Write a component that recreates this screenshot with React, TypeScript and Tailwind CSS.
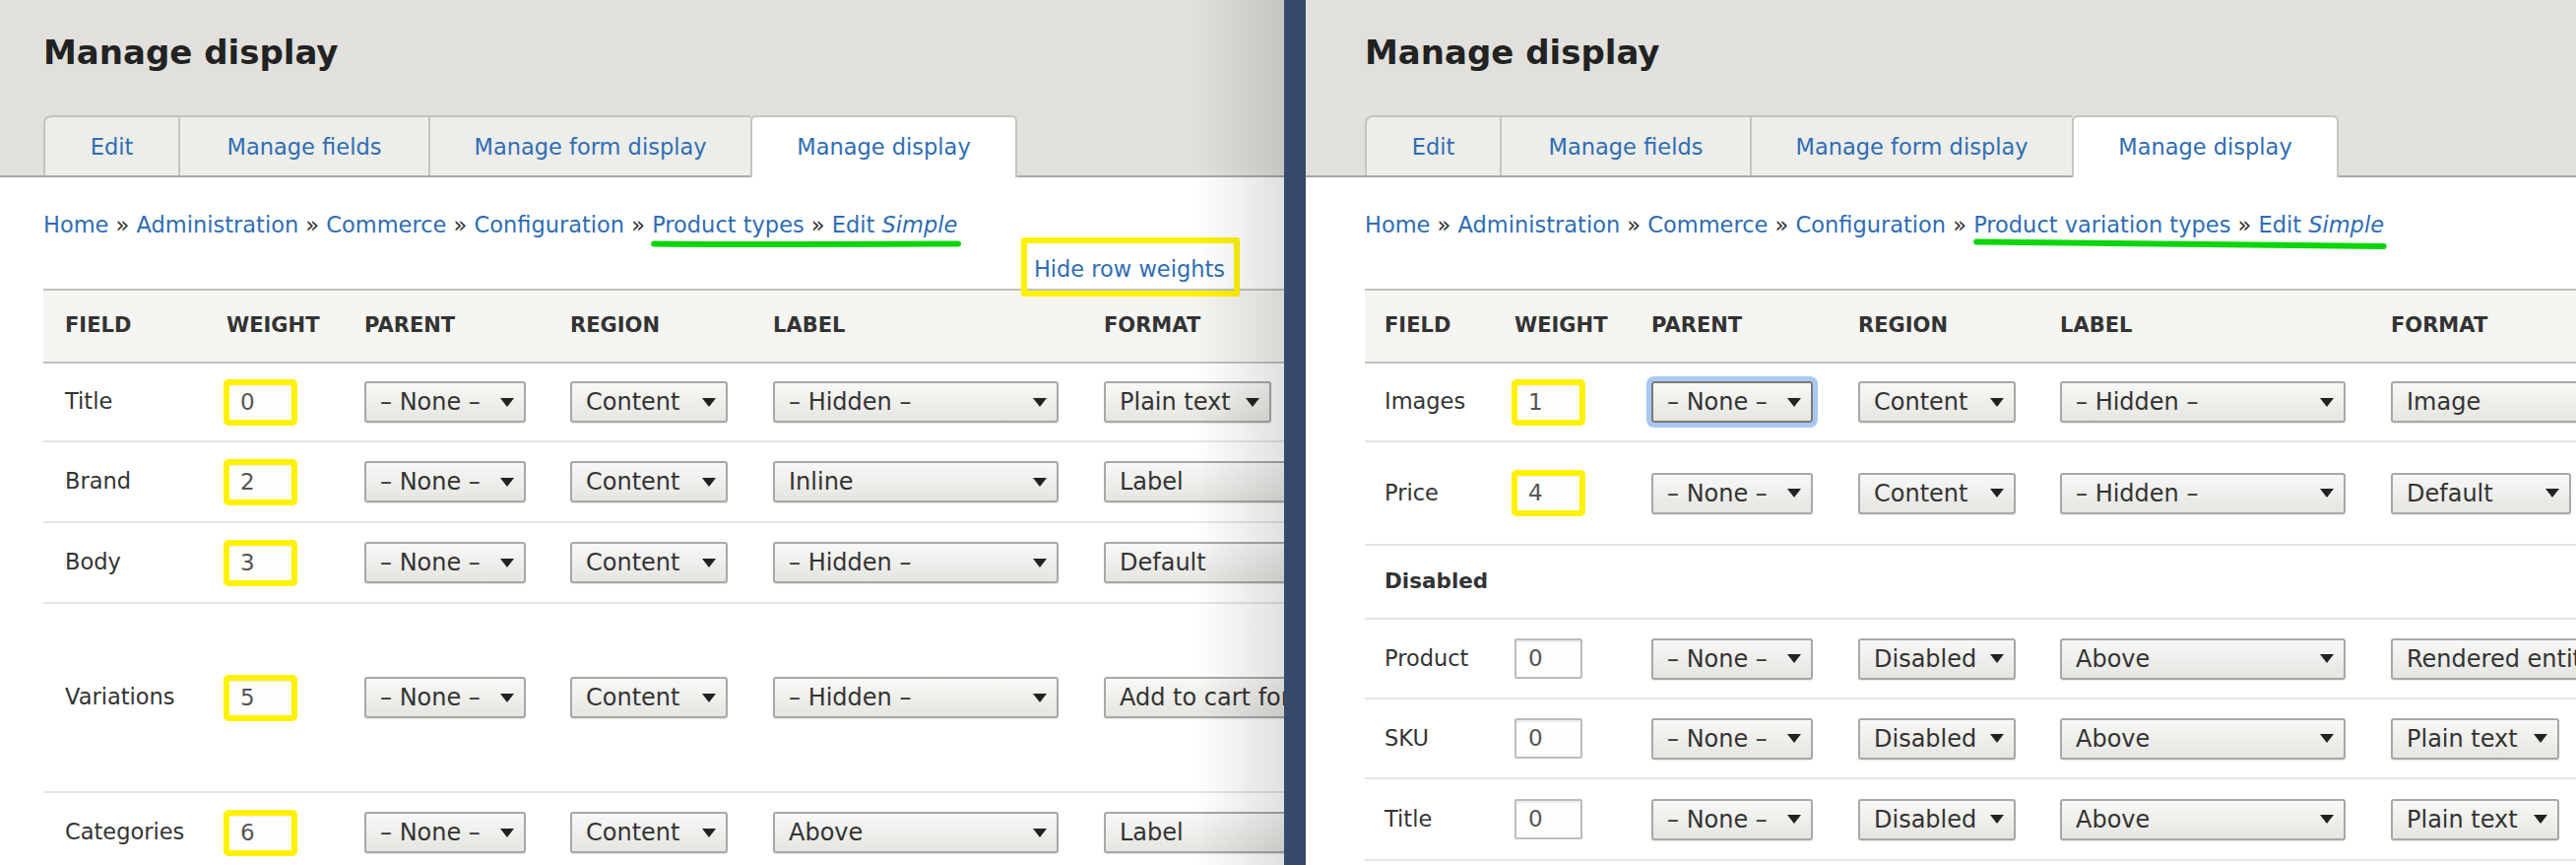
import React from 'react';

type Row = {
  name: string;
  weight?: string;
  hl?: boolean;
  h: string;
  parent?: string;
  focus?: boolean;
  region?: string;
  label?: string;
  format?: string;
  formatW?: string;
  group?: boolean;
};

const link = 'text-[#2e6db4]';

function Select({ text, className = '', focus = false }: { text: string; className?: string; focus?: boolean }) {
  return (
    <div
      className={`flex h-[42px] shrink-0 items-center justify-between whitespace-nowrap rounded-[3px] border-2 bg-linear-to-b from-[#f8f8f6] to-[#e5e5e2] pl-[14px] pr-[10px] text-[24px] text-[#333] shadow-[0_1px_1px_rgba(0,0,0,0.1)] ${
        focus ? 'border-[#7a7a7a] ring-[5px] ring-[#a9c8f2]' : 'border-[#a8a8a6]'
      } ${className}`}
    >
      <span>{text}</span>
      <svg width="14" height="9" viewBox="0 0 14 9" className="ml-3 shrink-0">
        <polygon points="0,0 14,0 7,9" fill="#222" />
      </svg>
    </div>
  );
}

function Weight({ value, hl }: { value: string; hl?: boolean }) {
  return (
    <div
      className={`flex h-[41px] w-[69px] items-center rounded-[2px] border-2 border-[#bcbcb9] bg-[#fdfdfb] pl-[12px] text-[23px] text-[#555] shadow-[inset_0_2px_2px_rgba(0,0,0,0.07)] ${
        hl ? 'outline-solid outline-[6px] outline-[#fff200] outline-offset-[-3px]' : ''
      }`}
    >
      {value}
    </div>
  );
}

function GreenLine({ d }: { d: string }) {
  return (
    <svg
      className="pointer-events-none absolute -left-[1px] -right-[4px] top-[calc(100%+1px)] h-[12px] w-[calc(100%+5px)]"
      viewBox="0 0 100 12"
      preserveAspectRatio="none"
    >
      <path d={d} stroke="#0bd60b" strokeWidth="6" strokeLinecap="round" fill="none" vectorEffect="non-scaling-stroke" />
    </svg>
  );
}

function Panel({
  pad,
  typeLabel,
  line,
  showHide,
  cols,
  firstPad,
  tableW,
  rows,
}: {
  pad: string;
  typeLabel: string;
  line: string;
  showHide: boolean;
  cols: string;
  firstPad: string;
  tableW: string;
  rows: Row[];
}) {
  const tabs = [
    { t: 'Edit', w: 'w-[137px]' },
    { t: 'Manage fields', w: 'w-[254px]' },
    { t: 'Manage form display', w: 'w-[327px]' },
  ];
  const sep = <span className="text-[#333]"> » </span>;

  return (
    <div className="flex flex-col">
      {/* header band */}
      <div className={`flex h-[180px] flex-col border-b-2 border-[#a9a9a5] bg-[#e1e0dc] ${pad}`}>
        <h1 className="mt-[33px] h-[40px] whitespace-nowrap text-[34px] font-bold leading-[40px] text-[#222]">Manage display</h1>
        <div className="mt-auto flex items-end">
          {tabs.map((tab, i) => (
            <div
              key={tab.t}
              className={`flex h-[61px] shrink-0 items-center justify-center whitespace-nowrap border-l-2 border-t-2 border-[#c4c4c0] bg-[#edede9] pt-[2px] text-[22.5px] ${link} ${tab.w} ${
                i === 0 ? 'rounded-tl-[8px]' : ''
              }`}
            >
              {tab.t}
            </div>
          ))}
          <div
            className={`-mb-[2px] flex h-[63px] w-[271px] shrink-0 items-center justify-center whitespace-nowrap rounded-t-[6px] border-x-2 border-t-2 border-[#c4c4c0] bg-white pb-[2px] pt-[2px] text-[22.5px] ${link}`}
          >
            Manage display
          </div>
        </div>
      </div>

      {/* content */}
      <div className={`flex flex-col bg-white ${pad}`}>
        <div className="mt-[33px] h-[30px] whitespace-nowrap text-[22.5px] leading-[30px]">
          <span className={link}>Home</span>
          {sep}
          <span className={link}>Administration</span>
          {sep}
          <span className={link}>Commerce</span>
          {sep}
          <span className={link}>Configuration</span>
          {sep}
          <span className="relative">
            <span className={link}>{typeLabel}</span>
            {sep}
            <span className={link}>
              Edit <em>Simple</em>
            </span>
            <GreenLine d={line} />
          </span>
        </div>

        <div className="mt-[15px] h-[30px] w-[1200px] text-right text-[22.5px] leading-[30px]">
          {showHide && (
            <span className={`relative inline-block ${link}`}>
              Hide row weights
              <span className="pointer-events-none absolute -bottom-[13px] -left-[13px] -right-[15px] -top-[17px] rounded-[3px] border-[6px] border-[#fff200]" />
            </span>
          )}
        </div>

        <div className={`mt-[5px] shrink-0 ${tableW}`}>
          <div className={`grid h-[76px] items-center border-y-2 border-[#c1c1bd] bg-[#f5f5f2] text-[21px] font-bold uppercase text-[#333] ${cols}`}>
            <div className={firstPad}>Field</div>
            <div className="pl-[22px]">Weight</div>
            <div className="pl-[22px]">Parent</div>
            <div className="pl-[22px]">Region</div>
            <div className="pl-[22px]">Label</div>
            <div className="pl-[22px]">Format</div>
          </div>

          {rows.map((r) =>
            r.group ? (
              <div key={r.name} className={`flex items-center border-b-2 border-[#e5e5e1] ${r.h}`}>
                <div className={`text-[21.5px] font-bold text-[#333] ${firstPad}`}>{r.name}</div>
              </div>
            ) : (
              <div key={r.name} className={`grid items-center border-b-2 border-[#e5e5e1] text-[22.5px] text-[#333] ${cols} ${r.h}`}>
                <div className={`whitespace-nowrap ${firstPad}`}>{r.name}</div>
                <div className="pl-[22px]">
                  <Weight value={r.weight ?? '0'} hl={r.hl} />
                </div>
                <div className="pl-[22px]">
                  <Select text={r.parent ?? '– None –'} className="w-[164px]" focus={r.focus} />
                </div>
                <div className="pl-[22px]">
                  <Select text={r.region ?? 'Content'} className="w-[160px]" />
                </div>
                <div className="pl-[22px]">
                  <Select text={r.label ?? '– Hidden –'} className="w-[290px]" />
                </div>
                <div className="pl-[22px]">
                  <Select text={r.format ?? ''} className={r.formatW ?? 'w-[330px]'} />
                </div>
              </div>
            )
          )}
        </div>
      </div>
    </div>
  );
}

export default function App() {
  const leftRows: Row[] = [
    { name: 'Title', weight: '0', hl: true, h: 'h-[80px]', label: '– Hidden –', format: 'Plain text', formatW: 'w-[170px]' },
    { name: 'Brand', weight: '2', hl: true, h: 'h-[82px]', label: 'Inline', format: 'Label' },
    { name: 'Body', weight: '3', hl: true, h: 'h-[82px]', label: '– Hidden –', format: 'Default' },
    { name: 'Variations', weight: '5', hl: true, h: 'h-[192px]', label: '– Hidden –', format: 'Add to cart form' },
    { name: 'Categories', weight: '6', hl: true, h: 'h-[82px]', label: 'Above', format: 'Label' },
  ];

  const rightRows: Row[] = [
    { name: 'Images', weight: '1', hl: true, h: 'h-[80px]', focus: true, label: '– Hidden –', format: 'Image', formatW: 'w-[300px]' },
    { name: 'Price', weight: '4', hl: true, h: 'h-[105px]', label: '– Hidden –', format: 'Default', formatW: 'w-[183px]' },
    { name: 'Disabled', h: 'h-[75px]', group: true },
    { name: 'Product', h: 'h-[81px]', region: 'Disabled', label: 'Above', format: 'Rendered entity', formatW: 'w-[300px]' },
    { name: 'SKU', h: 'h-[81px]', region: 'Disabled', label: 'Above', format: 'Plain text', formatW: 'w-[171px]' },
    { name: 'Title', h: 'h-[83px]', region: 'Disabled', label: 'Above', format: 'Plain text', formatW: 'w-[171px]' },
  ];

  return (
    <div className="flex h-[878px] w-[2616px] overflow-hidden bg-white font-['DejaVu_Sans',sans-serif]">
      <div className="relative w-[1304px] shrink-0 overflow-hidden">
        <Panel
          pad="pl-[44px]"
          typeLabel="Product types"
          line="M1,5.5 C30,6.5 60,6 99,5.5"
          showHide
          cols="grid-cols-[164px_140px_209px_206px_336px_1fr]"
          firstPad="pl-[22px]"
          tableW="w-[1420px]"
          rows={leftRows}
        />
        <div className="pointer-events-none absolute inset-y-0 right-0 w-[90px] bg-linear-to-r from-transparent to-black/[0.12]" />
      </div>
      <div className="w-[22px] shrink-0 bg-[#354a6b]" />
      <div className="relative min-w-0 flex-1 overflow-hidden">
        <Panel
          pad="pl-[60px]"
          typeLabel="Product variation types"
          line="M1,3.5 C40,5 70,7 99,8"
          showHide={false}
          cols="grid-cols-[130px_139px_210px_205px_336px_1fr]"
          firstPad="pl-[20px]"
          tableW="w-[1320px]"
          rows={rightRows}
        />
      </div>
    </div>
  );
}
